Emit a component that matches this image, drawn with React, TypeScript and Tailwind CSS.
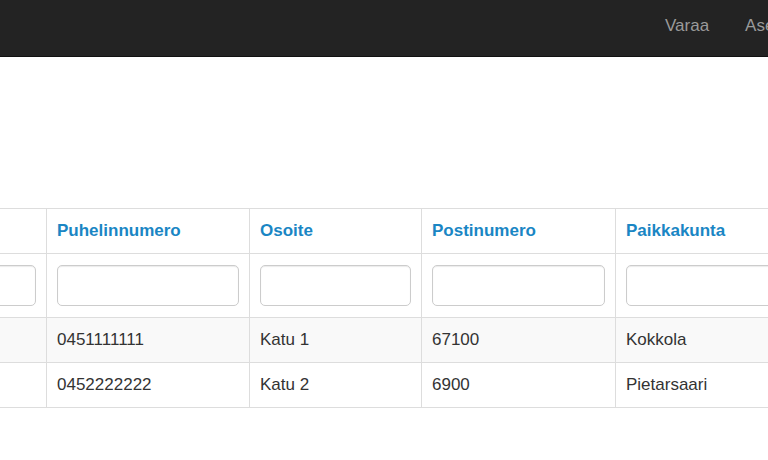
const columns = ["Nimi", "Puhelinnumero", "Osoite", "Postinumero", "Paikkakunta"];

const widths = ["w-[200px]", "w-[203px]", "w-[172px]", "w-[194px]", "w-[200px]"];

const rows = [
  ["Matti Meikäläinen", "0451111111", "Katu 1", "67100", "Kokkola"],
  ["Maija Meikäläinen", "0452222222", "Katu 2", "6900", "Pietarsaari"],
];

function NavBar() {
  return (
    <div className="h-[57px] overflow-hidden border-b border-[#111] bg-[#232323]">
      <ul className="ml-[647px] flex whitespace-nowrap text-[17px] text-[#9a9a9a]">
        <li className="px-[18px] pt-[14px] leading-[24px]">Varaa</li>
        <li className="px-[18px] pt-[14px] leading-[24px]">Asetukset</li>
      </ul>
    </div>
  );
}

export default function App() {
  return (
    <div
      className="h-[460px] w-[768px] overflow-hidden bg-white text-[17px] text-[#333]"
      style={{ fontFamily: '"Liberation Sans", Arial, sans-serif' }}
    >
      <NavBar />
      <div className="pt-[151px]">
        <table className="-ml-[154px] w-[969px] min-w-[969px] table-fixed border-collapse border border-[#dddddd]">
          <colgroup>
            {widths.map((w, i) => (
              <col key={i} className={w} />
            ))}
          </colgroup>
          <thead>
            <tr>
              {columns.map((c) => (
                <th
                  key={c}
                  className="border-l border-[#dddddd] px-[10px] py-[10px] text-left font-bold leading-[24px] text-[#1a86c4]"
                >
                  {c}
                </th>
              ))}
            </tr>
            <tr>
              {columns.map((c) => (
                <th key={c} className="border-l border-t border-[#dddddd] px-[10px] py-[11px]">
                  <input
                    type="text"
                    className="block h-[41px] w-full rounded-[5px] border border-[#cccccc] bg-white shadow-[inset_0_1px_1px_rgba(0,0,0,0.08)]"
                  />
                </th>
              ))}
            </tr>
          </thead>
          <tbody>
            {rows.map((r, i) => (
              <tr key={i} className={i % 2 === 0 ? "bg-[#f9f9f9]" : "bg-white"}>
                {r.map((v, j) => (
                  <td
                    key={j}
                    className="whitespace-nowrap border-l border-t border-[#dddddd] px-[10px] py-[10px] leading-[24px]"
                  >
                    {v}
                  </td>
                ))}
              </tr>
            ))}
          </tbody>
        </table>
      </div>
    </div>
  );
}
